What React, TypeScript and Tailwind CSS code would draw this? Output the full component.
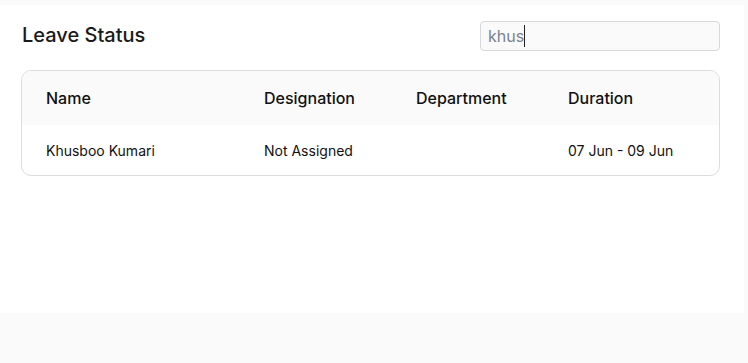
export default function App() {
  const rows = [
    { name: "Khusboo Kumari", designation: "Not Assigned", department: "", duration: "07 Jun - 09 Jun" },
  ];

  return (
    <div className="min-h-[363px] bg-[#fafafa] pt-[5px] font-['Inter',sans-serif] text-[#111]">
      <div className="w-[744px] h-[308px] bg-white px-[21px] pt-4">
        <div className="flex items-center justify-between pr-[3px]">
          <h1 className="text-[20px] leading-7 font-medium text-[#1a1a1a] pl-px pb-0.5">Leave Status</h1>
          <div className="flex items-center w-[240px] h-[30px] rounded-[4px] border border-[#d9d9d9] bg-[#fafafa] px-[7px]">
            <span className="text-[16px] text-[#7b8190] leading-5">khus</span>
            <span className="w-px h-[22px] bg-[#222]" />
          </div>
        </div>

        <div className="mt-[19px] w-[699px] rounded-[10px] border border-[#dcdcdc] overflow-hidden">
          <div className="grid grid-cols-[218px_152px_152px_1fr] h-[54px] items-center bg-[#fafafa] text-[16px] font-medium text-[#111]">
            <div className="pl-6">Name</div>
            <div className="pl-6">Designation</div>
            <div className="pl-6">Department</div>
            <div className="pl-6">Duration</div>
          </div>
          {rows.map((row, i) => (
            <div
              key={i}
              className="grid grid-cols-[218px_152px_152px_1fr] h-[50px] items-center text-[14px] text-[#111]">
              <div className="pl-6">{row.name}</div>
              <div className="pl-6">{row.designation}</div>
              <div className="pl-6">{row.department}</div>
              <div className="pl-6">{row.duration}</div>
            </div>
          ))}
        </div>
      </div>
    </div>
  );
}
